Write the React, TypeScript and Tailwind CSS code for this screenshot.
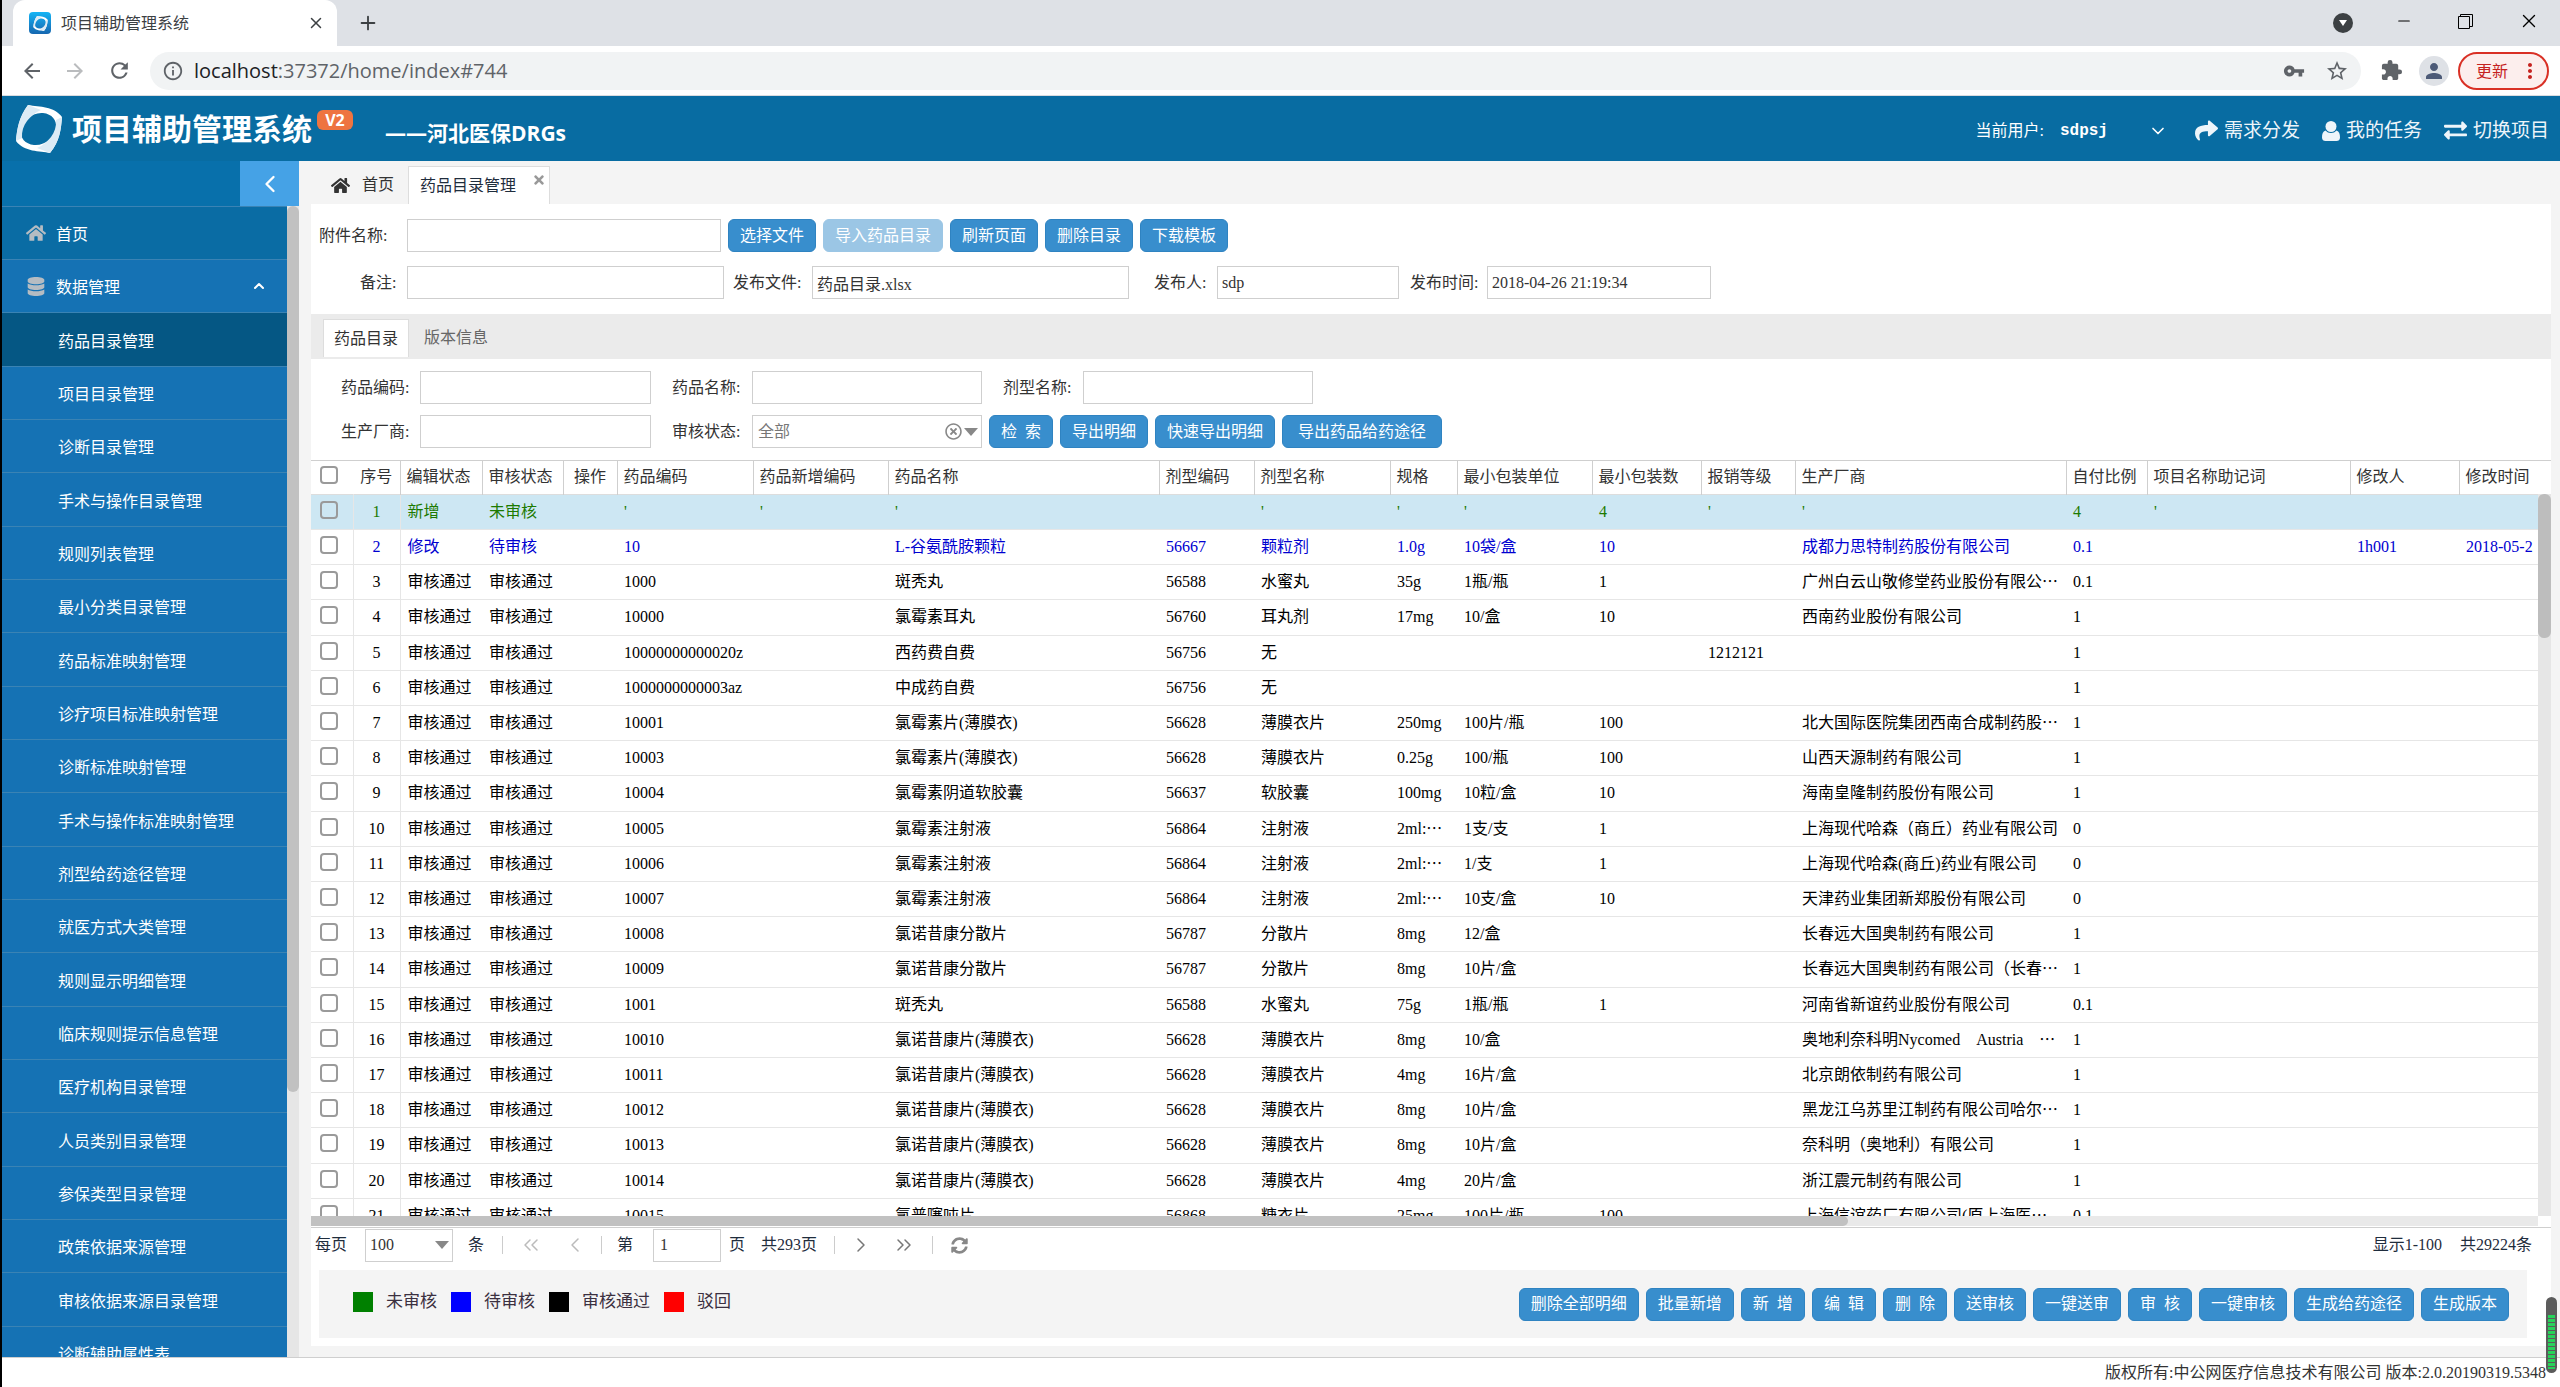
import React, { useState } from 'react';
import { ChevronDown, ChevronLeft, ChevronRight, ChevronUp, ChevronsLeft, ChevronsRight, Minus, Plus, X } from 'lucide-react';
import { FaDatabase, FaExchangeAlt, FaHome, FaRegTimesCircle, FaShare, FaSyncAlt, FaTimes } from 'react-icons/fa';
import { MdArrowBack, MdArrowForward, MdExtension, MdInfoOutline, MdMoreVert, MdPerson, MdRefresh, MdStarBorder, MdVpnKey } from 'react-icons/md';

const menuItems = [
  '药品目录管理', '项目目录管理', '诊断目录管理', '手术与操作目录管理', '规则列表管理',
  '最小分类目录管理', '药品标准映射管理', '诊疗项目标准映射管理', '诊断标准映射管理',
  '手术与操作标准映射管理', '剂型给药途径管理', '就医方式大类管理', '规则显示明细管理',
  '临床规则提示信息管理', '医疗机构目录管理', '人员类别目录管理', '参保类型目录管理',
  '政策依据来源管理', '审核依据来源目录管理', '诊断辅助属性表',
];

const columns = [
  { label: '编辑状态', width: 'w-[82px]' },
  { label: '审核状态', width: 'w-[81px]' },
  { label: '操作', width: 'w-[54px]' },
  { label: '药品编码', width: 'w-[136px]' },
  { label: '药品新增编码', width: 'w-[135px]' },
  { label: '药品名称', width: 'w-[271px]' },
  { label: '剂型编码', width: 'w-[95px]' },
  { label: '剂型名称', width: 'w-[136px]' },
  { label: '规格', width: 'w-[67px]' },
  { label: '最小包装单位', width: 'w-[135px]' },
  { label: '最小包装数', width: 'w-[109px]' },
  { label: '报销等级', width: 'w-[94px]' },
  { label: '生产厂商', width: 'w-[271px]' },
  { label: '自付比例', width: 'w-[81px]' },
  { label: '项目名称助记词', width: 'w-[203px]' },
  { label: '修改人', width: 'w-[109px]' },
  { label: '修改时间', width: '' },
];

const ok = '审核通过';

// 编辑状态, 审核状态, 操作, 药品编码, 新增编码, 名称, 剂型编码, 剂型, 规格, 单位, 包装数, 报销, 厂商, 自付, 助记词, 修改人, 修改时间
const rows: string[][] = [
  ['新增', '未审核', '', "'", "'", "'", '', "'", "'", "'", '4', "'", "'", '4', "'"],
  ['修改', '待审核', '', '10', '', 'L-谷氨酰胺颗粒', '56667', '颗粒剂', '1.0g', '10袋/盒', '10', '', '成都力思特制药股份有限公司', '0.1', '', '1h001', '2018-05-2'],
  [ok, ok, '', '1000', '', '斑秃丸', '56588', '水蜜丸', '35g', '1瓶/瓶', '1', '', '广州白云山敬修堂药业股份有限公…', '0.1'],
  [ok, ok, '', '10000', '', '氯霉素耳丸', '56760', '耳丸剂', '17mg', '10/盒', '10', '', '西南药业股份有限公司', '1'],
  [ok, ok, '', '10000000000020z', '', '西药费自费', '56756', '无', '', '', '', '1212121', '', '1'],
  [ok, ok, '', '1000000000003az', '', '中成药自费', '56756', '无', '', '', '', '', '', '1'],
  [ok, ok, '', '10001', '', '氯霉素片(薄膜衣)', '56628', '薄膜衣片', '250mg', '100片/瓶', '100', '', '北大国际医院集团西南合成制药股…', '1'],
  [ok, ok, '', '10003', '', '氯霉素片(薄膜衣)', '56628', '薄膜衣片', '0.25g', '100/瓶', '100', '', '山西天源制药有限公司', '1'],
  [ok, ok, '', '10004', '', '氯霉素阴道软胶囊', '56637', '软胶囊', '100mg', '10粒/盒', '10', '', '海南皇隆制药股份有限公司', '1'],
  [ok, ok, '', '10005', '', '氯霉素注射液', '56864', '注射液', '2ml:…', '1支/支', '1', '', '上海现代哈森（商丘）药业有限公司', '0'],
  [ok, ok, '', '10006', '', '氯霉素注射液', '56864', '注射液', '2ml:…', '1/支', '1', '', '上海现代哈森(商丘)药业有限公司', '0'],
  [ok, ok, '', '10007', '', '氯霉素注射液', '56864', '注射液', '2ml:…', '10支/盒', '10', '', '天津药业集团新郑股份有限公司', '0'],
  [ok, ok, '', '10008', '', '氯诺昔康分散片', '56787', '分散片', '8mg', '12/盒', '', '', '长春远大国奥制药有限公司', '1'],
  [ok, ok, '', '10009', '', '氯诺昔康分散片', '56787', '分散片', '8mg', '10片/盒', '', '', '长春远大国奥制药有限公司（长春…', '1'],
  [ok, ok, '', '1001', '', '斑秃丸', '56588', '水蜜丸', '75g', '1瓶/瓶', '1', '', '河南省新谊药业股份有限公司', '0.1'],
  [ok, ok, '', '10010', '', '氯诺昔康片(薄膜衣)', '56628', '薄膜衣片', '8mg', '10/盒', '', '', '奥地利奈科明Nycomed　Austria　…', '1'],
  [ok, ok, '', '10011', '', '氯诺昔康片(薄膜衣)', '56628', '薄膜衣片', '4mg', '16片/盒', '', '', '北京朗依制药有限公司', '1'],
  [ok, ok, '', '10012', '', '氯诺昔康片(薄膜衣)', '56628', '薄膜衣片', '8mg', '10片/盒', '', '', '黑龙江乌苏里江制药有限公司哈尔…', '1'],
  [ok, ok, '', '10013', '', '氯诺昔康片(薄膜衣)', '56628', '薄膜衣片', '8mg', '10片/盒', '', '', '奈科明（奥地利）有限公司', '1'],
  [ok, ok, '', '10014', '', '氯诺昔康片(薄膜衣)', '56628', '薄膜衣片', '4mg', '20片/盒', '', '', '浙江震元制药有限公司', '1'],
  [ok, ok, '', '10015', '', '氯普噻吨片', '56868', '糖衣片', '25mg', '100片/瓶', '100', '', '上海信谊药厂有限公司(原上海医…', '0.1'],
];

const actions = ['删除全部明细', '批量新增', '新  增', '编  辑', '删  除', '送审核', '一键送审', '审  核', '一键审核', '生成给药途径', '生成版本'];

const legend = [
  { label: '未审核', color: 'bg-[#008000]' },
  { label: '待审核', color: 'bg-[#0000ff]' },
  { label: '审核通过', color: 'bg-black' },
  { label: '驳回', color: 'bg-[#ff0000]' },
];

const Btn: React.FC<{ children: React.ReactNode; disabled?: boolean }> = ({ children, disabled }) => (
  <button
    disabled={disabled}
    className={`h-[33px] px-[11px] rounded-md border whitespace-pre text-white leading-none ${disabled ? 'bg-[#9bc6e5] border-[#9bc6e5]' : 'bg-[#388ecd] border-[#2f83c1]'}`}
  >
    {children}
  </button>
);

interface FieldProps {
  id: string;
  label: string;
  labelWidth: string;
  width: string;
  value?: string;
}

const Field: React.FC<FieldProps> = ({ id, label, labelWidth, width, value = '' }) => (
  <div className="flex items-center">
    <label htmlFor={id} className={`shrink-0 ${labelWidth}`}>{label}:</label>
    <input id={id} defaultValue={value} className={`h-[33px] px-1 border border-[#cfcfcf] bg-white outline-none ${width}`} />
  </div>
);

const Check: React.FC<{ label: string }> = ({ label }) => (
  <input type="checkbox" aria-label={label} className="block size-[18px] ml-[9px] mb-1 appearance-none rounded-[4px] border-2 border-[#9a9a9a]" />
);

const CellText: React.FC<{ text: string }> = ({ text }) => {
  if (!text.endsWith('…')) return <>{text}</>;
  return <>{text.slice(0, -1)}<span lang="zh-CN" className="inline-block font-['Noto_Sans_CJK_SC',sans-serif] leading-none">…</span></>;
};

const Logo = ({ className }: { className: string }) => (
  <svg viewBox="0 0 46 48" className={className} aria-hidden="true">
    <path
      fillRule="evenodd"
      fill="#fff"
      d="M12 0C24 2 38 1 46 12C45 24 44 36 34 48C24 46 8 47 0 36C1 24 3 12 12 0ZM27 8C16 7 6 16 5 25C4 33 9 39 18 40C29 41 39 32 40 23C41 15 36 9 27 8Z"
    />
    <path d="M12 0 25 5C14 10 5 20 6 33L0 36C1 24 3 12 12 0Z" fill="#dcebf5" />
    <path d="M34 48 21 43C32 38 41 28 40 15L46 12C45 24 44 36 34 48Z" fill="#dcebf5" />
  </svg>
);

const BrowserBar = () => (
  <div className="shrink-0 font-['Open_Sans','Noto_Sans_CJK_SC',sans-serif]">
    <div className="h-[46px] bg-[#dee1e6] flex items-center">
      <div className="ml-[11px] w-[324px] h-full bg-white rounded-t-xl flex items-center pl-4 pr-3">
        <div className="size-[22px] rounded bg-gradient-to-b from-[#14b4f5] to-[#1667b0] flex items-center justify-center">
          <Logo className="size-[15px]" />
        </div>
        <span className="ml-[10px] text-base text-[#3c4043] flex-1">项目辅助管理系统</span>
        <button aria-label="关闭标签页"><X className="size-[18px] text-[#3c4043]" /></button>
      </div>
      <button aria-label="新标签页" className="ml-5"><Plus className="size-[22px] text-[#3c4043]" /></button>
      <div className="ml-auto flex items-center text-black">
        <svg viewBox="0 0 20 20" className="size-5 mr-[42px]"><circle cx="10" cy="10" r="10" fill="#3c4043" /><path d="M6 7h8l-4 6z" fill="#fff" /></svg>
        <button aria-label="最小化" className="mr-[45px] -mt-1"><Minus className="size-[18px]" strokeWidth={1.5} /></button>
        <button aria-label="还原" className="mr-[45px] -mt-1">
          <svg viewBox="0 0 15 15" className="size-[15px]" fill="none" stroke="#000"><path d="M.5 2.500h11v12h-11zM2.500 2V.5h12v12H12" /></svg>
        </button>
        <button aria-label="关闭" className="mr-5 -mt-1"><X className="size-[22px]" strokeWidth={1.5} /></button>
      </div>
    </div>
    <div className="h-[50px] bg-white border-b border-[#dadce0] flex items-center pl-[18px] pr-[11px] text-[#5f6368]">
      <button aria-label="后退"><MdArrowBack className="size-6" /></button>
      <button aria-label="前进" className="ml-[19px] text-[#babcbe]"><MdArrowForward className="size-6" /></button>
      <button aria-label="刷新" className="ml-5"><MdRefresh className="size-[25px]" /></button>
      <div className="ml-[18px] flex-1 h-[38px] rounded-full bg-[#f1f3f4] flex items-center pl-3 pr-3">
        <MdInfoOutline className="size-[22px]" />
        <span className="ml-[10px] flex-1 text-[20px]"><span className="text-[#202124]">localhost</span>:37372/home/index#744</span>
        <MdVpnKey className="size-[22px]" />
        <MdStarBorder className="ml-5 size-6" />
      </div>
      <MdExtension className="ml-[19px] size-[23px]" />
      <span className="ml-4 size-[30px] rounded-full bg-[#dee1e6] flex items-center justify-center"><MdPerson className="size-6 text-[#4d5b78]" /></span>
      <button className="ml-[9px] h-[38px] w-[91px] rounded-full border-2 border-[#d93025] bg-[#fceeed] text-[#c5221f] text-base flex items-center pl-4">
        更新<MdMoreVert className="ml-[10px] size-6" />
      </button>
    </div>
  </div>
);

const Header = () => (
  <header className="shrink-0 h-[65px] bg-[#086ca2] text-white flex items-center pl-[14px] pr-[11px] font-['Open_Sans','Noto_Sans_CJK_SC',sans-serif]">
    <Logo className="w-[46px] h-12" />
    <h1 className="ml-[10px] text-[30px] font-bold leading-none">项目辅助管理系统</h1>
    <span className="ml-[5px] mb-[18px] h-5 w-9 rounded-md bg-[#ee7440] text-base font-bold leading-5 text-center">V2</span>
    <span className="ml-8 mt-[10px] text-[21px] font-bold leading-none">——河北医保DRGs</span>
    <div className="ml-auto mt-1 flex items-center font-['Liberation_Serif','Noto_Sans_CJK_SC',serif]">
      <span className="text-base">当前用户:</span>
      <button className="ml-4 w-[108px] flex items-center justify-between text-base font-bold font-['Liberation_Mono',monospace]">
        sdpsj<ChevronDown className="size-5" />
      </button>
      <nav className="ml-[27px] flex gap-[22px] text-[19px] text-[#eef5fa]">
        <a href="#dispatch" className="flex items-center gap-[6px]"><FaShare className="size-[23px]" />需求分发</a>
        <a href="#tasks" className="flex items-center gap-[6px]">
          <svg viewBox="0 0 18 20" className="w-[18px] h-5" fill="currentColor"><circle cx="9" cy="5.500" r="5.500" /><path d="M3.500 9.500C.8 10.300 0 13 0 16.500 0 19 1.500 20 3.500 20h11c2 0 3.500-1 3.500-3.500 0-3.500-.8-6.200-3.500-7-1.500 1.700-3.300 2.500-5.500 2.500s-4-.8-5.500-2.500z" /></svg>
          我的任务
        </a>
        <a href="#switch" className="flex items-center gap-[6px]"><FaExchangeAlt className="size-[23px]" />切换项目</a>
      </nav>
    </div>
  </header>
);

const Sidebar = () => (
  <aside className="shrink-0 w-[297px] flex flex-col font-['Noto_Sans_CJK_SC',sans-serif]">
    <div className="shrink-0 h-[45px] bg-[#0870ab] flex justify-end">
      <button aria-label="收起菜单" className="w-[59px] bg-[#45a2e6] text-white flex items-center justify-center"><ChevronLeft className="size-7" strokeWidth={2} /></button>
    </div>
    <div className="flex-1 min-h-0 flex">
      <nav className="flex-1 overflow-hidden bg-[#1572b4] text-white text-base">
        <a href="#home" className="h-[53px] flex items-center px-6 bg-[#0a6ca4] border-t border-[#3a83b4]">
          <FaHome className="w-5 h-[18px] text-[#b5bcc2]" /><span className="ml-[10px]">首页</span>
        </a>
        <a href="#data" className="h-[53px] flex items-center px-6 border-t border-[#3a83b4]">
          <FaDatabase className="w-5 h-[19px] text-[#b5bcc2]" /><span className="ml-[10px] flex-1">数据管理</span>
          <ChevronUp className="size-4 -mr-1" strokeWidth={3} />
        </a>
        <ul>
          {menuItems.map((item, i) => (
            <li key={item}>
              <a href="#menu" className={`${i % 3 === 0 ? 'h-[54px]' : 'h-[53px]'} pl-14 flex items-center border-t border-[#3a83b4] ${i === 0 ? 'bg-[#055784]' : ''}`}>{item}</a>
            </li>
          ))}
        </ul>
      </nav>
      <div className="w-3 bg-[#e6e6e6]"><div className="h-[77%] rounded-md bg-[#c1c1c1]" /></div>
    </div>
  </aside>
);

const DrugTable = () => (
  <div className="flex-1 min-h-0 flex flex-col border-t border-[#cfcfcf]">
    <div className="flex-1 min-h-0 overflow-hidden relative">
      <table className="w-full table-fixed border-collapse text-left">
        <thead>
          <tr className="h-[33px] text-[#333] border-b border-[#ddd]">
            <th className="w-[42px] font-normal"><Check label="全选" /></th>
            <th className="w-[47px] font-normal text-center">序号</th>
            {columns.map((c) => (
              <th key={c.label} className={`${c.width} font-normal border-l border-[#cfcfcf] whitespace-nowrap ${c.label === '操作' ? 'text-center' : 'pl-[6px]'}`}>{c.label}</th>
            ))}
          </tr>
        </thead>
        <tbody>
          {rows.map((row, i) => (
            <tr
              key={i}
              className={`${i % 5 === 3 ? 'h-9' : 'h-[35px]'} border-b border-[#e6e6e6] ${i === 0 ? 'bg-[#cde7f3] text-[#1d7a00]' : i === 1 ? 'text-[#0000d0]' : 'text-black'}`}
            >
              <td><Check label={`选择第${i + 1}行`} /></td>
              <td className="border-x border-[#e6e6e6] text-center">{i + 1}</td>
              {columns.map((c, j) => (
                <td key={c.label} className="pl-[7px] whitespace-nowrap overflow-hidden"><CellText text={row[j] ?? ''} /></td>
              ))}
            </tr>
          ))}
        </tbody>
      </table>
      <div className="absolute top-[33px] right-0 bottom-0 w-[13px] bg-[#e6e6e6]"><div className="h-1/5 rounded-md bg-[#bdbdbd]" /></div>
    </div>
    <div className="shrink-0 h-[10px] mr-[13px] bg-[#e9e9e9]"><div className="h-full w-[69%] rounded-r-md bg-[#c1c1c1]" /></div>
  </div>
);

const Pager = () => (
  <div className="shrink-0 h-[43px] mt-px pb-2 border-t border-[#cfcfcf] flex items-center pl-1 pr-[19px] text-[#1f2d3d]">
    <label htmlFor="size">每页</label>
    <div className="relative ml-[18px]">
      <select id="size" className="block w-[88px] h-[33px] pl-1 border border-[#cfcfcf] appearance-none text-[#333]"><option>100</option></select>
      <svg viewBox="0 0 14 8" className="absolute right-1 top-3 w-[14px] h-2"><path d="M0 0h14L7 8z" fill="#888" /></svg>
    </div>
    <span className="ml-[15px]">条</span>
    <span className="ml-[18px] h-[18px] w-px bg-[#ccc]" />
    <button aria-label="首页" className="ml-4 text-[#bbb]"><ChevronsLeft className="size-6" strokeWidth={1.5} /></button>
    <button aria-label="上一页" className="ml-5 text-[#bbb]"><ChevronLeft className="size-6" strokeWidth={1.5} /></button>
    <span className="ml-[14px] h-[18px] w-px bg-[#ccc]" />
    <label htmlFor="page" className="ml-[15px]">第</label>
    <input id="page" defaultValue="1" className="ml-5 w-[68px] h-[33px] px-[6px] border border-[#cfcfcf] text-[#333]" />
    <span className="ml-2">页</span>
    <span className="ml-4">共293页</span>
    <span className="ml-[17px] h-[18px] w-px bg-[#ccc]" />
    <button aria-label="下一页" className="ml-[14px] text-[#777]"><ChevronRight className="size-6" strokeWidth={1.5} /></button>
    <button aria-label="末页" className="ml-[19px] text-[#777]"><ChevronsRight className="size-6" strokeWidth={1.5} /></button>
    <span className="ml-4 h-[18px] w-px bg-[#ccc]" />
    <button aria-label="刷新" className="ml-[18px] text-[#888]"><FaSyncAlt className="size-[17px]" /></button>
    <span className="ml-auto">显示1-100</span>
    <span className="ml-[18px]">共29224条</span>
  </div>
);

export default function App() {
  const [tab, setTab] = useState(0);

  return (
    <div className="h-screen overflow-hidden flex flex-col bg-white border-l-2 border-black text-base leading-5 text-[#333] font-['Liberation_Serif','Noto_Sans_CJK_SC',serif]">
      <BrowserBar />
      <Header />

      <div className="flex-1 min-h-0 flex">
        <Sidebar />
        <main className="flex-1 min-w-0 flex flex-col bg-[#f4f4f4] pl-3 pr-[9px] pb-[11px]">
          <div className="shrink-0 h-[43px] flex items-end pl-5">
            <a href="#home" className="h-[38px] flex items-center"><FaHome className="size-[19px]" /><span className="ml-3">首页</span></a>
            <div className="ml-[14px] w-[142px] h-[38px] bg-white border border-b-0 border-[#ddd] flex pl-[11px]">
              <span className="self-center text-[#1f2d3d]">药品目录管理</span>
              <button aria-label="关闭" className="ml-4 mt-[6px] self-start text-[#999]"><FaTimes className="size-[14px]" /></button>
            </div>
          </div>

          <div className="flex-1 min-h-0 bg-white flex flex-col">
            <div className="shrink-0 flex items-center gap-[7px] pl-2 pt-[15px]">
              <Field id="attach" label="附件名称" labelWidth="w-[88px]" width="w-[314px]" />
              <Btn>选择文件</Btn>
              <Btn disabled>导入药品目录</Btn>
              <Btn>刷新页面</Btn>
              <Btn>删除目录</Btn>
              <Btn>下载模板</Btn>
            </div>
            <div className="shrink-0 flex items-center pl-[49px] pt-[14px] pb-[15px]">
              <Field id="remark" label="备注" labelWidth="w-[47px]" width="w-[317px] mr-[9px]" />
              <Field id="file" label="发布文件" labelWidth="w-[79px]" width="w-[317px] mr-[25px]" value="药品目录.xlsx" />
              <Field id="publisher" label="发布人" labelWidth="w-[63px]" width="w-[182px] mr-[11px]" value="sdp" />
              <Field id="time" label="发布时间" labelWidth="w-[77px]" width="w-[224px]" value="2018-04-26 21:19:34" />
            </div>

            <div className="shrink-0 h-[45px] bg-[#ebebeb] pl-3 pt-[5px] flex">
              {['药品目录', '版本信息'].map((t, i) => (
                <button key={t} onClick={() => setTab(i)} className={`h-[38px] w-[86px] mr-1 ${tab === i ? 'bg-white border border-b-0 border-[#ddd] text-[#333]' : 'text-[#666]'}`}>{t}</button>
              ))}
            </div>

            <div className="shrink-0 flex items-center gap-[21px] pl-[30px] pt-3">
              <Field id="code" label="药品编码" labelWidth="w-[79px]" width="w-[231px]" />
              <Field id="name" label="药品名称" labelWidth="w-20" width="w-[230px]" />
              <Field id="form" label="剂型名称" labelWidth="w-20" width="w-[230px]" />
            </div>
            <div className="shrink-0 flex items-center gap-[7px] pl-[30px] pt-[11px] pb-3">
              <Field id="maker" label="生产厂商" labelWidth="w-[79px]" width="w-[231px] mr-[14px]" />
              <div className="flex items-center relative">
                <label htmlFor="status" className="w-20">审核状态:</label>
                <select id="status" className="w-[230px] h-[33px] pl-[5px] border border-[#cfcfcf] appearance-none text-[#777]"><option>全部</option></select>
                <FaRegTimesCircle className="absolute right-5 size-[17px] text-[#888]" />
                <svg viewBox="0 0 14 8" className="absolute right-1 w-[14px] h-2"><path d="M0 0h14L7 8z" fill="#888" /></svg>
              </div>
              <Btn>{'检  索'}</Btn>
              <Btn>导出明细</Btn>
              <Btn>快速导出明细</Btn>
              <button className="h-[33px] w-40 rounded-md border bg-[#388ecd] border-[#2f83c1] text-white leading-none">导出药品给药途径</button>
            </div>

            <DrugTable />
            <Pager />

            <div className="shrink-0 h-[68px] ml-2 mr-6 mb-2 bg-[#f4f4f4] flex items-center justify-between pl-[34px] pr-[18px]">
              <div className="flex gap-[14px] pb-1 text-[17px] text-[#3b3040]">
                {legend.map((l) => (
                  <span key={l.label} className="flex items-center gap-[13px]"><i className={`size-5 ${l.color}`} />{l.label}</span>
                ))}
              </div>
              <div className="flex gap-[7px]">
                {actions.map((a) => <Btn key={a}>{a}</Btn>)}
              </div>
            </div>
          </div>
        </main>
      </div>

      <footer className="shrink-0 h-[30px] border-t border-[#cfcfcf] flex items-center justify-end pr-[14px]">
        版权所有:中公网医疗信息技术有限公司 版本:2.0.20190319.5348
      </footer>

      {/* floating level gauge over the page corner */}
      <div className="fixed right-[3px] bottom-[14px] w-[11px] h-[76px] rounded-full bg-[#5c5c5c] px-[2px] pt-[18px] pb-1">
        <div className="h-full bg-[repeating-linear-gradient(#27d35a_0px,#27d35a_3px,#5c5c5c_3px,#5c5c5c_4px)]" />
      </div>
    </div>
  );
}
